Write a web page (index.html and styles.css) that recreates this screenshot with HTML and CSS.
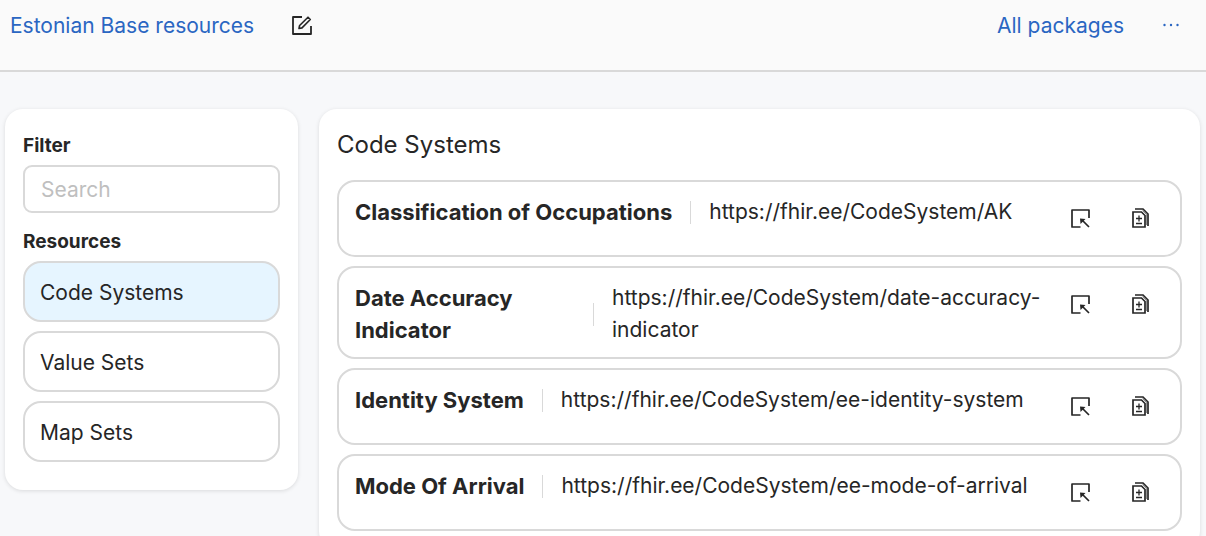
FILE: index.html
```html
<!DOCTYPE html>
<html lang="en">
<head>
<meta charset="utf-8">
<meta name="viewport" content="width=device-width, initial-scale=1">
<title>Estonian Base resources</title>
<link rel="stylesheet" href="styles.css">
</head>
<body>
<svg class="sprite" aria-hidden="true">
  <symbol id="launch" viewBox="0 0 20 20">
    <path d="M19 10V2H2v17h8.500M19 19l-7-7" fill="none" stroke="currentColor" stroke-width="1.700" stroke-linejoin="round"/>
    <path d="M10 10.500l5.500.5-5 5z" fill="currentColor"/>
  </symbol>
  <symbol id="diff" viewBox="0 0 20 20">
    <path d="M3 4h8.500L15 7.500V19H3z" fill="none" stroke="currentColor" stroke-width="1.700"/>
    <path d="M5 1h8l5 5v12" fill="none" stroke="currentColor" stroke-width="1.700"/>
    <path d="M12.500 2.500L16.500 6.500V17" fill="none" stroke="currentColor" stroke-width=".5"/>
    <path d="M9 7.500v6M6 10.500h6M6 15.500h6" fill="none" stroke="currentColor" stroke-width="1.300"/>
  </symbol>
</svg>
<header class="topbar">
  <a class="link" href="#">Estonian Base resources</a>
  <button class="icon-btn edit" type="button" aria-label="Edit">
    <svg class="icon" viewBox="0 0 20 20"><path d="M10 1H1v17h18v-8" fill="none" stroke="currentColor" stroke-width="1.800" stroke-linejoin="round"/><path d="M7 12.500l.6-3L16 1.200l2.300 2.300-8.300 8.400z" fill="none" stroke="currentColor" stroke-width="1.600" stroke-linejoin="round"/></svg>
  </button>
  <nav class="topnav">
    <a class="link" href="#">All packages</a>
    <button class="icon-btn more" type="button" aria-label="More">
      <svg class="icon" viewBox="0 0 20 20"><g fill="currentColor"><circle cx="3.500" cy="9" r="1.200"/><circle cx="10" cy="9" r="1.200"/><circle cx="16.500" cy="9" r="1.200"/></g></svg>
    </button>
  </nav>
</header>
<main class="page">
  <aside class="card sidebar">
    <label class="label" for="search">Filter</label>
    <input class="search" id="search" type="text" placeholder="Search">
    <h2 class="label">Resources</h2>
    <div class="types">
      <button class="type active" type="button">Code Systems</button>
      <button class="type" type="button">Value Sets</button>
      <button class="type" type="button">Map Sets</button>
    </div>
  </aside>
  <section class="card content">
    <h1 class="title">Code Systems</h1>
    <div class="rows">
      <article class="row">
        <div class="info"><strong class="name">Classification of Occupations</strong><span class="divider"></span><span>https://fhir.ee/CodeSystem/AK</span></div>
        <div class="actions"><button class="icon-btn" type="button" aria-label="Open"><svg class="icon"><use href="#launch"/></svg></button><button class="icon-btn" type="button" aria-label="Compare"><svg class="icon"><use href="#diff"/></svg></button></div>
      </article>
      <article class="row">
        <div class="info"><strong class="name">Date Accuracy Indicator</strong><span class="divider"></span><span>https://fhir.ee/CodeSystem/date-accuracy-indicator</span></div>
        <div class="actions"><button class="icon-btn" type="button" aria-label="Open"><svg class="icon"><use href="#launch"/></svg></button><button class="icon-btn" type="button" aria-label="Compare"><svg class="icon"><use href="#diff"/></svg></button></div>
      </article>
      <article class="row">
        <div class="info"><strong class="name">Identity System</strong><span class="divider"></span><span>https://fhir.ee/CodeSystem/ee-identity-system</span></div>
        <div class="actions"><button class="icon-btn" type="button" aria-label="Open"><svg class="icon"><use href="#launch"/></svg></button><button class="icon-btn" type="button" aria-label="Compare"><svg class="icon"><use href="#diff"/></svg></button></div>
      </article>
      <article class="row">
        <div class="info"><strong class="name">Mode Of Arrival</strong><span class="divider"></span><span>https://fhir.ee/CodeSystem/ee-mode-of-arrival</span></div>
        <div class="actions"><button class="icon-btn" type="button" aria-label="Open"><svg class="icon"><use href="#launch"/></svg></button><button class="icon-btn" type="button" aria-label="Compare"><svg class="icon"><use href="#diff"/></svg></button></div>
      </article>
    </div>
  </section>
</main>
</body>
</html>
```
FILE: styles.css
```css
* {
  box-sizing: border-box;
}

body {
  margin: 0;
  background: #f7f8fa;
  color: #262626;
  font: 21px/32px Inter, "Liberation Sans", sans-serif;
}

button,
input {
  font: inherit;
  color: inherit;
}

.sprite {
  display: none;
}

.topbar {
  display: flex;
  align-items: flex-start;
  padding: 10px 5px 28px 10px;
  background: #fafafa;
  border-bottom: 2px solid #d9d9d9;
}

.link {
  color: #2a66c2;
  text-decoration: none;
  white-space: nowrap;
}

.topnav {
  display: flex;
  gap: 17px;
  margin-left: auto;
}

.icon-btn {
  display: flex;
  flex: none;
  align-items: center;
  justify-content: center;
  width: 60px;
  height: 44px;
  padding: 0;
  border: 0;
  background: none;
  cursor: pointer;
}

.icon {
  display: block;
  width: 20px;
  height: 20px;
}

.edit,
.more {
  height: 32px;
}

.edit {
  margin-left: 18px;
}

.more {
  color: #2a66c2;
}

.page {
  display: flex;
  align-items: flex-start;
  gap: 21px;
  padding: 37px 6px 37px 5px;
}

.card {
  padding: 18px;
  border-radius: 18px;
  background: #fff;
  box-shadow: 0 1px 4px rgba(0, 0, 0, 0.12);
}

.sidebar {
  flex: none;
  width: 293px;
  padding-bottom: 28px;
}

.content {
  flex: 1;
  min-width: 0;
}

.label {
  display: block;
  margin: 0;
  padding: 4px 0;
  font-size: 19px;
  line-height: 30px;
  font-weight: 700;
}

.search {
  display: block;
  width: 100%;
  height: 48px;
  margin-bottom: 10px;
  padding: 0 16px;
  border: 2px solid #d9d9d9;
  border-radius: 9px;
  background: #fff;
}

.search::placeholder {
  color: #bfbfbf;
  opacity: 1;
}

.types {
  display: flex;
  flex-direction: column;
  gap: 9px;
}

.type {
  height: 61px;
  padding: 2px 15px 0;
  border: 2px solid #d9d9d9;
  border-radius: 18px;
  background: #fff;
  text-align: left;
  cursor: pointer;
}

.type.active {
  background: #e6f5ff;
}

.title {
  margin: 0 0 17px;
  font-size: 24px;
  line-height: 36px;
  font-weight: 400;
}

.rows {
  display: flex;
  flex-direction: column;
  gap: 9px;
}

.row {
  display: flex;
  align-items: flex-start;
  min-height: 77px;
  padding: 14px 10px 11px 16px;
  border: 2px solid #d9d9d9;
  border-radius: 18px;
}

.info {
  display: flex;
  flex: 1;
  align-items: center;
  min-width: 0;
}

.name {
  font-size: 22px;
}

.divider {
  flex: none;
  width: 1px;
  height: 23px;
  margin: 0 18px;
  background: #d9d9d9;
}

.actions {
  display: flex;
  flex: none;
}
```
